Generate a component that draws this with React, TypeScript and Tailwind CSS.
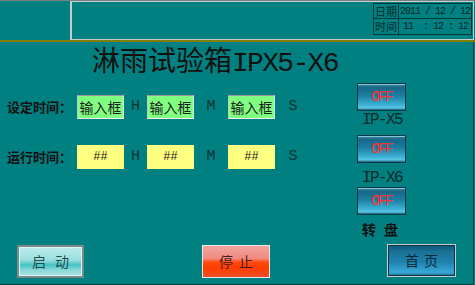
import React from "react";

const mono = "font-['Liberation_Mono',monospace]";

const DateTable = () => (
  <div className="w-[99px] h-[32px] border border-[#003838] flex flex-col text-[#022a2a]">
    <div className="flex h-[15px] border-b border-[#003838]">
      <div className="w-[25px] border-r border-[#003838] flex items-center justify-center text-[11px] leading-none">
        日期
      </div>
      <div className={`flex-1 flex items-center pl-[1px] text-[10px] tracking-[-1px] whitespace-pre ${mono}`}>
        2011 / 12 / 12
      </div>
    </div>
    <div className="flex flex-1">
      <div className="w-[25px] border-r border-[#003838] flex items-center justify-center text-[11px] leading-none">
        时间
      </div>
      <div className={`flex-1 flex items-center pl-[4px] text-[10px] tracking-[-1px] whitespace-pre ${mono}`}>
        11  : 12 : 12
      </div>
    </div>
  </div>
);

type RowProps = {
  label: string;
  value: string;
  kind: "set" | "run";
  className?: string;
};

const TimeBox = ({ value, kind }: { value: string; kind: "set" | "run" }) =>
  kind === "set" ? (
    <div className="w-[47px] h-[24px] bg-[#80ff80] border border-t-[#9a9a9a] border-l-[#c8c8c8] border-r-[#e4e4e4] border-b-[#ececec] flex items-center justify-center text-[14px] text-[#1a1a1a] whitespace-nowrap">
      {value}
    </div>
  ) : (
    <div className={`w-[47px] h-[24px] bg-[#ffff80] flex items-center justify-center text-[12px] text-[#202020] ${mono}`}>
      {value}
    </div>
  );

const Unit = ({ children, w }: { children: string; w: string }) => (
  <span className={`${w} text-center text-[15px] text-[#0d3535] ${mono}`}>{children}</span>
);

const TimeRow = ({ label, value, kind, className }: RowProps) => (
  <div className={`flex items-center h-[24px] pl-[7px] ${className ?? ""}`}>
    <span className="w-[70px] text-[13px] font-bold text-[#111] whitespace-nowrap">{label}</span>
    <TimeBox value={value} kind={kind} />
    <Unit w="w-[23px]">H</Unit>
    <TimeBox value={value} kind={kind} />
    <Unit w="w-[34px]">M</Unit>
    <TimeBox value={value} kind={kind} />
    <Unit w="w-[36px]">S</Unit>
  </div>
);

const OffButton = () => (
  <button
    type="button"
    className={`w-[49px] h-[28px] shrink-0 border border-[#0a3a48] bg-[linear-gradient(to_bottom,#3c88a4_0%,#176888_14%,#1c7ea2_45%,#3aaed2_78%,#58c6e6_92%,#1c5c74_100%)] shadow-[inset_0_1px_0_#8cc4d6] flex items-center justify-center text-[14px] tracking-[-1.5px] text-[#ff3030] ${mono}`}
  >
    OFF
  </button>
);

export default function App() {
  return (
    <div className="w-[475px] h-[285px] bg-[#008080] border-t border-[#7a8282] flex flex-col overflow-hidden font-['Noto_Sans_CJK_SC',sans-serif]">
      {/* 顶部栏 */}
      <div className="h-[39px] flex shrink-0">
        <div className="w-[70px]" />
        <div className="w-[404px] border border-l-2 border-[#c4cccc] flex justify-end pt-[1px] pr-[1px]">
          <DateTable />
        </div>
      </div>
      <div className="h-[2px] bg-[#808000] shrink-0" />

      <div className="w-[474px] flex-1 border-r border-b border-[#0a4040] flex flex-col">
        <div className="flex h-[197px]">
          <div className="w-[357px] flex flex-col">
            <h1 className="mt-[1px] pl-[92px] h-[32px] text-[28px] leading-[32px] text-[#111] whitespace-nowrap">
              淋雨试验箱<span className={`tracking-[-1.7px] ${mono}`}>IPX5-X6</span>
            </h1>
            <TimeRow className="mt-[20px]" label="设定时间：" value="输入框" kind="set" />
            <TimeRow className="mt-[26px]" label="运行时间：" value="##" kind="run" />
          </div>

          <div className="w-[49px] flex flex-col pt-[41px]">
            <OffButton />
            <div className={`h-[24px] pt-[1px] pl-[5px] text-[16px] leading-[16px] tracking-[-1.6px] text-[#0d2a2a] whitespace-nowrap ${mono}`}>
              IP-X5
            </div>
            <OffButton />
            <div className={`h-[24px] pt-[7px] pl-[5px] text-[16px] leading-[16px] tracking-[-1.6px] text-[#0d2a2a] whitespace-nowrap ${mono}`}>
              IP-X6
            </div>
            <OffButton />
            <div className="h-[24px] pt-[6px] pl-[5px] flex gap-[8px] text-[14px] leading-[16px] font-bold text-[#111] whitespace-nowrap">
              <span>转</span>
              <span>盘</span>
            </div>
          </div>
        </div>

        {/* 底部按钮 */}
        <div className="flex mt-[6px] h-[33px]">
          <button
            type="button"
            className="ml-[17px] w-[67px] h-[33px] border-2 border-[#7c8a8a] bg-[linear-gradient(to_bottom,#bcecec_0%,#9cdede_45%,#44c4c4_62%,#8cd8d8_80%,#ace4e4_100%)] shadow-[inset_0_0_0_1px_#d8f4f4] flex items-center justify-center gap-[9px] text-[14px] text-[#1a4c50]"
          >
            <span>启</span>
            <span>动</span>
          </button>
          <button
            type="button"
            className="ml-[118px] w-[68px] h-[33px] border border-[#e8e8e8] bg-[linear-gradient(to_bottom,#f4a4a0_0%,#f08a80_40%,#ff4a10_52%,#ff3c00_72%,#e8502a_100%)] flex items-center justify-center gap-[6px] text-[14px] text-[#4a1c18]"
          >
            <span>停</span>
            <span>止</span>
          </button>
          <button
            type="button"
            className="ml-[117px] -mt-[1px] w-[69px] h-[33px] border border-[#c8cccc] bg-[linear-gradient(to_bottom,#0c5676_0%,#1a7296_22%,#1e82ae_55%,#3aa8d8_88%,#1a6a90_100%)] shadow-[inset_0_0_0_1px_#083648] flex items-center justify-center gap-[5px] text-[14px] text-[#0a2a3c]"
          >
            <span>首</span>
            <span>页</span>
          </button>
        </div>
      </div>
    </div>
  );
}
